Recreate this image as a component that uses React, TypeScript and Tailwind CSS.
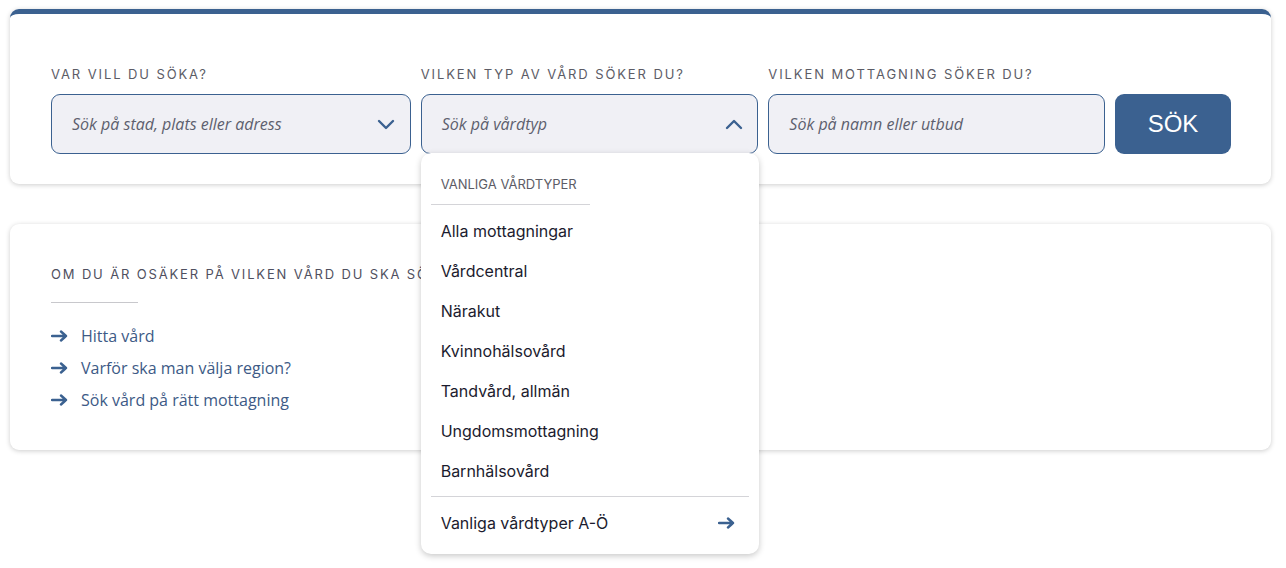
import React from "react";

const BLUE = "#3b6190";

function ChevronDown() {
  return (
    <svg width="18" height="11" viewBox="0 0 18 11" fill="none">
      <path d="M2 2 L9 9 L16 2" stroke={BLUE} strokeWidth="2.4" strokeLinecap="round" strokeLinejoin="round" />
    </svg>
  );
}
function ChevronUp() {
  return (
    <svg width="18" height="11" viewBox="0 0 18 11" fill="none">
      <path d="M2 9 L9 2 L16 9" stroke={BLUE} strokeWidth="2.4" strokeLinecap="round" strokeLinejoin="round" />
    </svg>
  );
}
function Arrow() {
  return (
    <svg width="17" height="12" viewBox="0 0 17 12" fill="none">
      <path d="M1 6 H15 M10 1.5 L15 6 L10 10.5" stroke={BLUE} strokeWidth="2.4" strokeLinecap="round" strokeLinejoin="round" />
    </svg>
  );
}

const items = [
  "Alla mottagningar",
  "Vårdcentral",
  "Närakut",
  "Kvinnohälsovård",
  "Tandvård, allmän",
  "Ungdomsmottagning",
  "Barnhälsovård",
];

export default function App() {
  return (
    <div className="min-h-[568px] bg-white pl-[10px] pr-[15px] pt-[9px]" style={{ fontFamily: "Inter, 'Noto Sans', sans-serif" }}>
      <div className="rounded-[9px] border-t-[5px] border-[#3b6190] bg-white shadow-[0_1px_5px_rgba(0,0,0,0.2)] pl-[41px] pr-[40px] pt-[50px] pb-[30px]">
        <div className="flex gap-[10px]">
          <div className="flex w-[360px] flex-col">
            <label className="mb-[10px] text-[13px] leading-[20px] tracking-[1.9px] text-[#5c5c66]">VAR VILL DU SÖKA?</label>
            <div className="flex h-[60px] items-center justify-between rounded-[9px] border border-[#3b6190] bg-[#f0f0f5] pl-[20px] pr-[15px]">
              <span className="text-[16px] italic text-[#5d5f6e]" style={{ fontFamily: "'Open Sans', sans-serif" }}>Sök på stad, plats eller adress</span>
              <ChevronDown />
            </div>
          </div>
          <div className="relative flex w-[338px] flex-col">
            <label className="mb-[10px] text-[13px] leading-[20px] tracking-[1.9px] text-[#5c5c66]">VILKEN TYP AV VÅRD SÖKER DU?</label>
            <div className="flex h-[60px] items-center justify-between rounded-[9px] border border-[#3b6190] bg-[#f0f0f5] pl-[20px] pr-[14px]">
              <span className="text-[16px] italic text-[#5d5f6e]" style={{ fontFamily: "'Open Sans', sans-serif" }}>Sök på vårdtyp</span>
              <ChevronUp />
            </div>
            <div className="absolute left-0 top-[89px] z-10 w-[338px] rounded-[10px] bg-white pt-[21px] pb-[11px] shadow-[0_2px_6px_rgba(0,0,0,0.22)]">
              <div className="mx-[10px] w-[159px] border-b border-[#d4d4d8] pb-[10px] pl-[10px] text-[13px] leading-[20px] text-[#5c5c66]">VANLIGA VÅRDTYPER</div>
              <ul className="pt-[6px] pb-[5px]">
                {items.map((t) => (
                  <li key={t} className="flex h-[40px] items-center pl-[20px] text-[16px] text-[#1b1b2e]">{t}</li>
                ))}
              </ul>
              <div className="mx-[10px] border-t border-[#d4d4d8]" />
              <div className="mt-[6px] flex h-[40px] items-center justify-between pl-[20px] pr-[24px] text-[16px] text-[#1b1b2e]">
                <span>Vanliga vårdtyper A-Ö</span>
                <Arrow />
              </div>
            </div>
          </div>
          <div className="flex w-[337px] flex-col">
            <label className="mb-[10px] text-[13px] leading-[20px] tracking-[1.9px] text-[#5c5c66]">VILKEN MOTTAGNING SÖKER DU?</label>
            <div className="flex h-[60px] items-center rounded-[9px] border border-[#3b6190] bg-[#f0f0f5] pl-[20px]">
              <span className="text-[16px] italic text-[#5d5f6e]" style={{ fontFamily: "'Open Sans', sans-serif" }}>Sök på namn eller utbud</span>
            </div>
          </div>
          <div className="flex flex-col justify-end">
            <button className="flex h-[60px] w-[116px] items-center justify-center rounded-[9px] bg-[#3b6190] text-[24px] text-white" style={{ fontFamily: "'Liberation Sans', Arial, sans-serif" }}>SÖK</button>
          </div>
        </div>
      </div>

      <div className="mt-[40px] rounded-[9px] bg-white shadow-[0_1px_5px_rgba(0,0,0,0.2)] pl-[41px] pr-[40px] pt-[40px] pb-[34px]">
        <div className="text-[13px] leading-[20px] tracking-[1.85px] text-[#4f5060]">OM DU ÄR OSÄKER PÅ VILKEN VÅRD DU SKA SÖKA</div>
        <div className="mt-[18px] w-[87px] border-t border-[#c8c8cc]" />
        <ul className="mt-[17px]" style={{ fontFamily: "'Open Sans', sans-serif" }}>
          {["Hitta vård", "Varför ska man välja region?", "Sök vård på rätt mottagning"].map((t) => (
            <li key={t} className="flex h-[32px] items-center gap-[13px] text-[16px] text-[#3d5a86]">
              <Arrow />
              <span>{t}</span>
            </li>
          ))}
        </ul>
      </div>
    </div>
  );
}
